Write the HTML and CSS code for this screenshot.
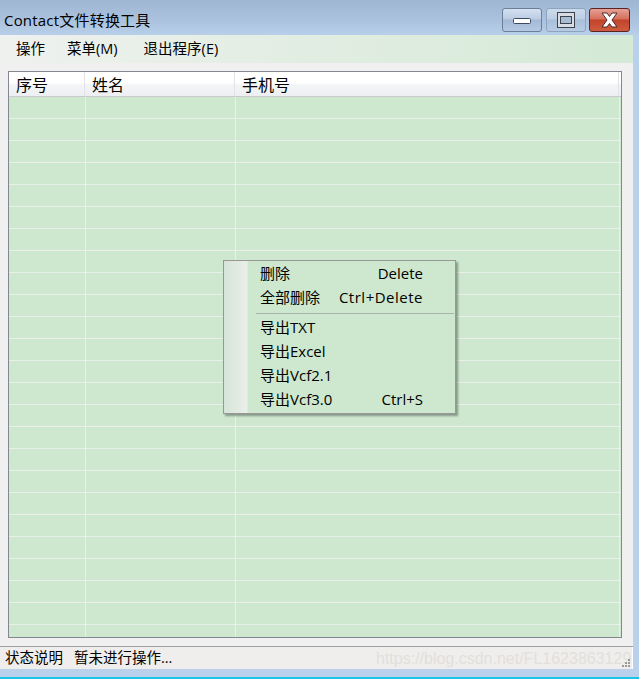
FILE: index.html
```html
<!DOCTYPE html>
<html lang="zh-CN">
<head>
<meta charset="utf-8">
<title>Contact文件转换工具</title>
<link rel="stylesheet" href="styles.css">
</head>
<body>
<div class="window">
  <div class="titlebar">
    <div class="title">Contact文件转换工具</div>
    <div class="caption-buttons">
      <div class="cbtn cbtn-min">
        <svg width="40" height="24" viewBox="0 0 40 24"><rect x="11.5" y="10.5" width="17" height="5" rx="1" fill="#fff" stroke="#3b4a60"/></svg>
      </div>
      <div class="cbtn cbtn-max">
        <svg width="40" height="24" viewBox="0 0 40 24"><rect x="11.5" y="4.5" width="17" height="15" fill="#d9dde3" stroke="#3b4250"/><rect x="14.5" y="8.5" width="11" height="7" fill="#a9bcd3" stroke="#3b4250"/></svg>
      </div>
      <div class="cbtn cbtn-close">
        <svg width="41" height="24" viewBox="0 0 41 24"><path d="M13 5 L18 5 L20.5 8.5 L23 5 L28 5 L23 12 L28 19 L23 19 L20.5 15.5 L18 19 L13 19 L18 12 Z" fill="#fff" stroke="#4a2a28" stroke-width="1" stroke-linejoin="round"/></svg>
      </div>
    </div>
  </div>
  <div class="client">
    <div class="menubar">
      <span class="menu-item">操作</span>
      <span class="menu-item menu-item-m">菜单(M)</span>
      <span class="menu-item menu-item-e">退出程序(E)</span>
    </div>
    <div class="main">
      <div class="list">
        <div class="list-header">
          <div class="hcell">序号</div>
          <div class="hcell">姓名</div>
          <div class="hcell">手机号</div>
        </div>
        <div class="list-body">
          <div class="row"><div></div><div></div><div></div></div>
          <div class="row"><div></div><div></div><div></div></div>
          <div class="row"><div></div><div></div><div></div></div>
          <div class="row"><div></div><div></div><div></div></div>
          <div class="row"><div></div><div></div><div></div></div>
          <div class="row"><div></div><div></div><div></div></div>
          <div class="row"><div></div><div></div><div></div></div>
          <div class="row"><div></div><div></div><div></div></div>
          <div class="row"><div></div><div></div><div></div></div>
          <div class="row"><div></div><div></div><div></div></div>
          <div class="row"><div></div><div></div><div></div></div>
          <div class="row"><div></div><div></div><div></div></div>
          <div class="row"><div></div><div></div><div></div></div>
          <div class="row"><div></div><div></div><div></div></div>
          <div class="row"><div></div><div></div><div></div></div>
          <div class="row"><div></div><div></div><div></div></div>
          <div class="row"><div></div><div></div><div></div></div>
          <div class="row"><div></div><div></div><div></div></div>
          <div class="row"><div></div><div></div><div></div></div>
          <div class="row"><div></div><div></div><div></div></div>
          <div class="row"><div></div><div></div><div></div></div>
          <div class="row"><div></div><div></div><div></div></div>
          <div class="row"><div></div><div></div><div></div></div>
          <div class="row"><div></div><div></div><div></div></div>
          <div class="row"><div></div><div></div><div></div></div>
          <div class="row"><div></div><div></div><div></div></div>
        </div>
      </div>
    </div>
    <div class="statusbar">
      <span class="status-label">状态说明</span>
      <span class="status-text">暂未进行操作...</span>
      <span class="watermark">https://blog.csdn.net/FL1623863129</span>
      <svg class="grip" width="10" height="10" viewBox="0 0 10 10">
        <rect x="7" y="1" width="2" height="2" fill="#9a9a9a"/>
        <rect x="4" y="4" width="2" height="2" fill="#9a9a9a"/>
        <rect x="7" y="4" width="2" height="2" fill="#9a9a9a"/>
        <rect x="1" y="7" width="2" height="2" fill="#9a9a9a"/>
        <rect x="4" y="7" width="2" height="2" fill="#9a9a9a"/>
        <rect x="7" y="7" width="2" height="2" fill="#9a9a9a"/>
      </svg>
    </div>
  </div>
  <div class="bottom-frame"></div>
  <div class="context-menu">
    <div class="cm-item"><span>删除</span><span class="cm-key">Delete</span></div>
    <div class="cm-item"><span>全部删除</span><span class="cm-key cm-key-wide">Ctrl+Delete</span></div>
    <div class="cm-sep"></div>
    <div class="cm-item"><span>导出TXT</span></div>
    <div class="cm-item"><span>导出Excel</span></div>
    <div class="cm-item"><span>导出Vcf2.1</span></div>
    <div class="cm-item"><span>导出Vcf3.0</span><span class="cm-key">Ctrl+S</span></div>
  </div>
</div>
</body>
</html>
```
FILE: styles.css
```css
* { box-sizing: border-box; }
html, body { margin: 0; padding: 0; }
body {
  width: 639px;
  height: 679px;
  overflow: hidden;
  font-family: "Open Sans", "Noto Sans CJK SC", sans-serif;
  color: #000;
  background: #b9d1ea;
}
.window {
  position: relative;
  width: 639px;
  height: 679px;
  display: flex;
  flex-direction: column;
}
.titlebar {
  height: 35px;
  flex: none;
  display: flex;
  justify-content: space-between;
  align-items: flex-start;
  background: linear-gradient(to bottom, #9fb6d3 0%, #abc3de 60%, #b7cfe8 100%);
}
.title {
  padding-left: 4px;
  padding-top: 9px;
  font-size: 15px;
  line-height: 22px;
  color: #000;
  letter-spacing: 0.2px;
}
.caption-buttons {
  display: flex;
  padding-top: 8px;
  padding-right: 9px;
}
.cbtn {
  height: 24px;
  border-radius: 3px;
}
.cbtn svg { display: block; }
.cbtn-min {
  width: 40px;
  border: 1px solid #6b7e9a;
  background: linear-gradient(to bottom, #d3e0ef 0%, #bccde3 45%, #a3b9d5 50%, #b5c9e2 100%);
}
.cbtn-min svg, .cbtn-max svg { margin: -1px; }
.cbtn-max {
  width: 40px;
  margin-left: 4px;
  border: 1px solid #8ea3c0;
  background: linear-gradient(to bottom, #cddbeb 0%, #bdcee4 45%, #a9bfd9 50%, #b7cbe3 100%);
}
.cbtn-close {
  width: 41px;
  margin-left: 3px;
  border: 1px solid #5a2424;
  background: linear-gradient(to bottom, #e6a194 0%, #d6705c 45%, #c2432a 50%, #cf5b3f 100%);
}
.cbtn-close svg { margin: -1px; }
.client {
  width: 633px;
  flex: none;
  display: flex;
  flex-direction: column;
  background: #f0f0f0;
}
.menubar {
  height: 28px;
  display: flex;
  align-items: center;
  padding-left: 16px;
  gap: 21px;
  background: linear-gradient(to right, #eff1ef 0%, #e4eee4 40%, #d4e9d6 100%);
  font-size: 14.5px;
  line-height: 20px;
}
.menu-item-m { margin-left: 1px; }
.menu-item-e { margin-left: 5px; }
.main {
  height: 584px;
  padding: 8px 11px 8px 8px;
  background: #f0f0f0;
  border-bottom: 1px solid #a0a0a0;
}
.list {
  height: 567px;
  border: 1px solid #828790;
  background: #cde8cf;
  overflow: hidden;
}
.list-header {
  height: 25px;
  display: grid;
  grid-template-columns: 76px 150px 384px;
  background: linear-gradient(to bottom, #ffffff 0%, #ffffff 45%, #f3f4f6 55%, #eeeff2 100%);
  border-bottom: 1px solid #c9cbd0;
}
.hcell {
  font-family: "Noto Sans CJK SC", sans-serif;
  font-size: 16px;
  line-height: 24px;
  padding-left: 7px;
  border-right: 1px solid #e2e3e8;
}
.list-body {
  height: 540px;
  overflow: hidden;
}
.row {
  height: 22px;
  display: grid;
  grid-template-columns: 77px 150px 384px;
  border-bottom: 1px solid #e9efe9;
}
.row > div { border-right: 1px solid #e9efe9; }
.statusbar {
  position: relative;
  height: 22px;
  display: flex;
  align-items: center;
  padding-left: 5px;
  background: #f0eeec;
  border-right: 1px solid #ffffff;
  font-size: 14.5px;
  line-height: 20px;
}
.status-text { margin-left: 11px; }
.watermark {
  position: absolute;
  left: 376px;
  top: 2px;
  font-family: "Liberation Sans", Arial, sans-serif;
  font-size: 16px;
  line-height: 20px;
  color: #e2dfdd;
}
.grip {
  position: absolute;
  right: 1px;
  bottom: 1px;
}
.bottom-frame {
  flex: none;
  height: 10px;
  border-bottom: 2px solid #19c6ea;
  background: #b9d1ea;
}
.context-menu {
  position: absolute;
  left: 223px;
  top: 260px;
  width: 233px;
  height: 154px;
  border: 1px solid #979797;
  padding-bottom: 2px;
  background: linear-gradient(to right, #d6e4d7 0px, #e9efe9 23px, #cde8cf 24px);
  box-shadow: 2px 2px 2px rgba(0, 0, 0, 0.35);
  font-size: 15px;
}
.cm-item {
  height: 24px;
  line-height: 24px;
  display: flex;
  justify-content: space-between;
  padding-left: 36px;
  padding-right: 32px;
}
.cm-key-wide { letter-spacing: 0.5px; }
.cm-sep {
  height: 1px;
  margin: 4px 1px 1px 32px;
  background: #a9b3a9;
}
```
